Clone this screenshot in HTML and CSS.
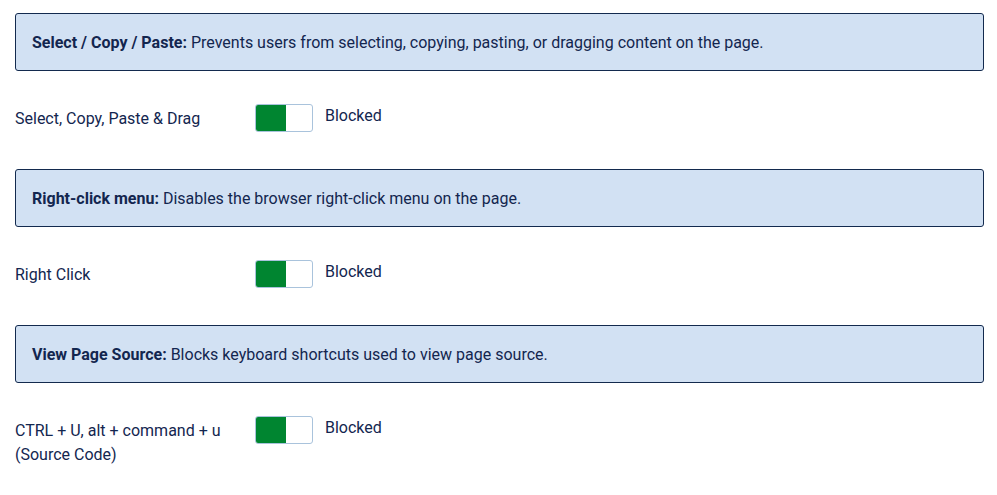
FILE: index.html
```html
<!DOCTYPE html>
<html>
<head>
<meta charset="utf-8">
<link rel="stylesheet" href="styles.css">
</head>
<body>
<div class="page">
  <section class="group">
    <div class="notice"><strong>Select / Copy / Paste:</strong> Prevents users from selecting, copying, pasting, or dragging content on the page.</div>
    <div class="row">
      <div class="label">Select, Copy, Paste &amp; Drag</div>
      <span class="toggle"><span class="knob"></span></span>
      <span class="state">Blocked</span>
    </div>
  </section>
  <section class="group">
    <div class="notice"><strong>Right-click menu:</strong> Disables the browser right-click menu on the page.</div>
    <div class="row">
      <div class="label">Right Click</div>
      <span class="toggle"><span class="knob"></span></span>
      <span class="state">Blocked</span>
    </div>
  </section>
  <section class="group">
    <div class="notice"><strong>View Page Source:</strong> Blocks keyboard shortcuts used to view page source.</div>
    <div class="row">
      <div class="label">CTRL + U, alt + command + u<br>(Source Code)</div>
      <span class="toggle"><span class="knob"></span></span>
      <span class="state">Blocked</span>
    </div>
  </section>
</div>
</body>
</html>
```
FILE: styles.css
```css
html, body {
  margin: 0;
  padding: 0;
  background: #ffffff;
}
body {
  font-family: Roboto, "Liberation Sans", sans-serif;
  color: #13264f;
}
.page {
  padding: 13px 13px 0 15px;
  display: flex;
  flex-direction: column;
  gap: 37px;
}
.group {
  display: flex;
  flex-direction: column;
  gap: 33px;
}
.notice {
  box-sizing: border-box;
  height: 58px;
  display: flex;
  align-items: center;
  padding: 0 16px;
  background: #d2e1f3;
  border: 1px solid #132a4e;
  border-radius: 3px;
  font-size: 16px;
}
.notice strong {
  font-weight: 700;
  margin-right: 4px;
}
.row {
  display: flex;
  align-items: flex-start;
  font-size: 16px;
  line-height: 24px;
}
.label {
  width: 240px;
  flex: none;
  padding-top: 3px;
}
.toggle {
  flex: none;
  box-sizing: border-box;
  width: 58px;
  height: 28px;
  border: 1px solid #a9c3dc;
  border-radius: 3px;
  background: #ffffff;
  overflow: hidden;
  display: flex;
}
.knob {
  width: 30px;
  height: 100%;
  background: #008530;
}
.state {
  margin-left: 12px;
  line-height: 24px;
}
```
